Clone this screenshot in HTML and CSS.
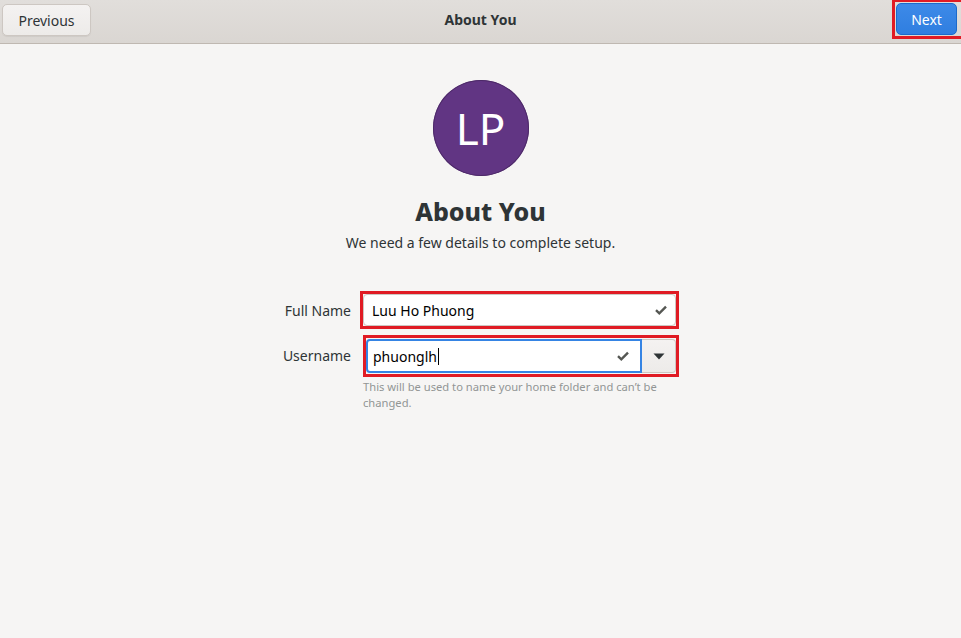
FILE: index.html
```html
<!DOCTYPE html>
<html>
<head>
<meta charset="utf-8">
<link rel="stylesheet" href="styles.css">
</head>
<body>
<header class="headerbar">
  <button class="btn btn-prev">Previous</button>
  <div class="hb-title">About You</div>
  <div class="next-mark"><button class="btn btn-next">Next</button></div>
</header>
<main class="page">
  <div class="avatar">LP</div>
  <h1 class="heading">About You</h1>
  <p class="subtitle">We need a few details to complete setup.</p>
  <div class="form">
    <label class="lbl lbl-name">Full Name</label>
    <div class="mark mark-name">
      <div class="entry">
        <span class="entry-text">Luu Ho Phuong</span>
        <svg class="check" width="12" height="10" viewBox="0 0 12 10"><path d="M1 5.2 L4.3 8.3 L11 1.6" fill="none" stroke="#555753" stroke-width="2.4"/></svg>
      </div>
    </div>
    <label class="lbl lbl-user">Username</label>
    <div class="mark mark-user">
      <div class="combo">
        <div class="entry entry-focus">
          <span class="entry-text">phuonglh<span class="caret"></span></span>
          <svg class="check" width="12" height="10" viewBox="0 0 12 10"><path d="M1 5.2 L4.3 8.3 L11 1.6" fill="none" stroke="#555753" stroke-width="2.4"/></svg>
        </div>
        <div class="combo-btn"><svg width="12" height="7" viewBox="0 0 12 7"><path d="M0.5 0.5 L11.5 0.5 L6 6.5 Z" fill="#2e3436"/></svg></div>
      </div>
    </div>
    <div></div>
    <p class="hint">This will be used to name your home folder and can’t be changed.</p>
  </div>
</main>
</body>
</html>
```
FILE: styles.css
```css
html, body {
  margin: 0;
  padding: 0;
}
body {
  width: 961px;
  height: 638px;
  background: #f6f5f4;
  font-family: "Noto Sans", "Open Sans", sans-serif;
  color: #2e3436;
  overflow: hidden;
}
.headerbar {
  height: 43px;
  border-bottom: 1px solid #bfb8b1;
  background: linear-gradient(to bottom, #e1dedb, #dad6d2);
  display: flex;
  align-items: flex-start;
  justify-content: space-between;
  position: relative;
}
.btn {
  font-family: inherit;
  font-size: 14px;
  border-radius: 5px;
  cursor: default;
}
.btn-prev {
  margin: 4px 0 0 2px;
  width: 89px;
  height: 32px;
  border: 1px solid #cdc7c2;
  background: linear-gradient(to bottom, #f4f2f1, #edebe9);
  color: #2e3436;
  box-shadow: 0 1px 1px rgba(0,0,0,0.06);
}
.hb-title {
  position: absolute;
  left: 0;
  right: 0;
  top: 10px;
  text-align: center;
  font-weight: 700;
  font-size: 14px;
  color: #2e3436;
  pointer-events: none;
}
.next-mark {
  border: 3px solid #e01b24;
  border-top-width: 2px;
  border-right: 0;
  padding: 1px 4px 0 1px;
  height: 33px;
  margin-left: auto;
}
.btn-next {
  width: 61px;
  height: 32px;
  border: 1px solid #1b6acb;
  background: linear-gradient(to bottom, #3d8ae8, #2f7ee0);
  color: #ffffff;
  font-size: 14px;
}
.page {
  display: flex;
  flex-direction: column;
  align-items: center;
}
.avatar {
  margin-top: 36px;
  width: 96px;
  height: 96px;
  border-radius: 50%;
  background: #613583;
  box-shadow: inset 0 0 0 1px #4d2a68;
  color: #ffffff;
  font-size: 44px;
  display: flex;
  align-items: center;
  justify-content: center;
}
.heading {
  margin: 18px 0 0;
  font-size: 25px;
  font-weight: 800;
  line-height: 34px;
  color: #2e3436;
}
.subtitle {
  margin: 5px 0 0;
  font-size: 14px;
  line-height: 20px;
  color: #2e3436;
}
.form {
  margin-top: 38px;
  display: grid;
  grid-template-columns: 80px 319px;
  column-gap: 9px;
  padding-right: 11px;
  align-items: center;
}
.lbl {
  text-align: right;
  font-size: 14px;
  color: #2e3436;
}
.lbl-user {
  margin-top: 5px;
}
.mark {
  border: 3px solid #e01b24;
  box-sizing: border-box;
}
.mark-name {
  width: 319px;
  height: 38px;
}
.mark-user {
  margin-top: 6px;
  margin-left: 3px;
  width: 316px;
  height: 42px;
  padding: 1px 0 0 0;
}
.entry {
  box-sizing: border-box;
  height: 32px;
  background: #ffffff;
  border: 1px solid #cdc7c2;
  border-radius: 4px;
  display: flex;
  align-items: center;
  padding: 0 8px 0 8px;
  font-size: 14px;
  color: #000000;
}
.entry-text {
  flex: 1;
  display: flex;
  align-items: center;
}
.caret {
  display: inline-block;
  width: 1px;
  height: 17px;
  background: #000;
  margin-left: 1px;
}
.check {
  flex: none;
}
.combo {
  display: flex;
  height: 34px;
}
.entry-focus {
  height: 34px;
  width: 276px;
  border: 2px solid #3584e4;
  border-radius: 4px 0 0 4px;
  padding-left: 5px;
  padding-right: 11px;
}
.combo-btn {
  flex: 1;
  height: 34px;
  box-sizing: border-box;
  border: 1px solid #cdc7c2;
  border-left: 0;
  border-radius: 0 4px 4px 0;
  background: linear-gradient(to bottom, #f4f2f1, #edebe9);
  display: flex;
  align-items: center;
  justify-content: center;
}
.hint {
  margin: 2px 0 0 3px;
  width: 312px;
  font-size: 11.2px;
  line-height: 16px;
  color: #929595;
}
```
